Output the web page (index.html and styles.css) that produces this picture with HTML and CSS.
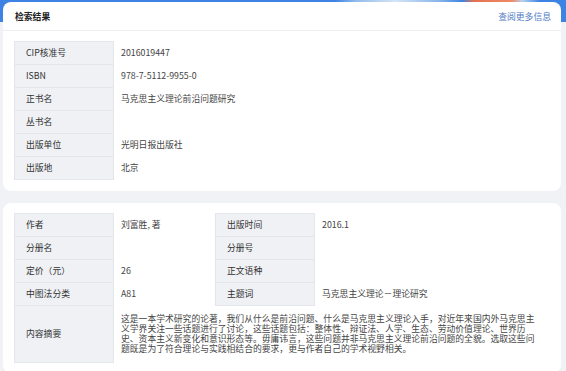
FILE: index.html
```html
<!DOCTYPE html>
<html lang="zh-CN">
<head>
<meta charset="utf-8">
<title>检索结果</title>
<link rel="stylesheet" href="styles.css">
</head>
<body>
<div class="page">
  <section class="card">
    <header class="card-head">
      <span class="card-title">检索结果</span>
      <a class="card-link" href="#">查阅更多信息</a>
    </header>
    <div class="card-body">
      <table class="info">
        <colgroup><col class="c-label"><col></colgroup>
        <tr><th>CIP核准号</th><td>2016019447</td></tr>
        <tr><th>ISBN</th><td>978-7-5112-9955-0</td></tr>
        <tr><th>正书名</th><td>马克思主义理论前沿问题研究</td></tr>
        <tr><th>丛书名</th><td></td></tr>
        <tr><th>出版单位</th><td>光明日报出版社</td></tr>
        <tr><th>出版地</th><td>北京</td></tr>
      </table>
    </div>
  </section>

  <section class="card card-second">
    <div class="card-body">
      <table class="info">
        <colgroup><col class="c-label"><col class="c-val"><col class="c-label"><col></colgroup>
        <tr><th>作者</th><td>刘富胜, 著</td><th>出版时间</th><td>2016.1</td></tr>
        <tr><th>分册名</th><td></td><th>分册号</th><td></td></tr>
        <tr><th>定价（元）</th><td>26</td><th>正文语种</th><td></td></tr>
        <tr><th>中图法分类</th><td>A81</td><th>主题词</th><td>马克思主义理论－理论研究</td></tr>
        <tr class="summary"><th>内容摘要</th><td colspan="3">这是一本学术研究的论著，我们从什么是前沿问题、什么是马克思主义理论入手，对近年来国内外马克思主义学界关注一些话题进行了讨论，这些话题包括：整体性、辩证法、人学、生态、劳动价值理论、世界历史、资本主义新变化和意识形态等。毋庸讳言，这些问题并非马克思主义理论前沿问题的全貌。选取这些问题既是为了符合理论与实践相结合的要求，更与作者自己的学术视野相关。</td></tr>
      </table>
    </div>
  </section>
</div>
</body>
</html>
```

FILE: styles.css
```css
* { box-sizing: border-box; }

html, body {
  margin: 0;
  height: 371px;
  overflow: hidden;
}

body {
  font-family: "Noto Sans CJK SC", "Noto Sans", "Liberation Sans", sans-serif;
  color: #333;
  background:
    linear-gradient(90deg, transparent 335px, #8fbaea 355px, #d6e5f6 395px, #86b4ea 440px, #3d83e4 462px, #e6714f 474px, #ee8a68 512px, #b8d2f0 522px, #3d83e4 540px) top left / 100% 4px no-repeat,
    linear-gradient(#3d83e4 0, #3d83e4 22px, #f0f2f5 22px, #f0f2f5 100%);
}

.page {
  padding: 2px 5px 0 3px;
  display: flex;
  flex-direction: column;
  gap: 12px;
}

.card {
  background: #fff;
  border-radius: 8px;
}

.card-head {
  height: 29px;
  display: flex;
  align-items: center;
  justify-content: space-between;
  padding: 0 10px 0 12px;
  border-bottom: 1px solid #eceef2;
}

.card-title {
  font-size: 8.8px;
  font-weight: 700;
  color: #222;
}

.card-link {
  font-size: 8.8px;
  color: #4f7cc7;
  text-decoration: none;
}

.card-body {
  padding: 10px 11px 11px 11px;
}

.card-second .card-body {
  padding-bottom: 10px;
}

.info {
  width: 100%;
  border-collapse: collapse;
  table-layout: fixed;
  font-size: 8.8px;
}

.c-label { width: 99px; }
.c-val { width: 102px; }

.info th,
.info td {
  height: 23px;
  padding: 0;
  vertical-align: middle;
  text-align: left;
  font-weight: 400;
  line-height: 10px;
}

.info th {
  background: #eff1f5;
  border: 1px solid #e3e6eb;
  padding-left: 11px;
  color: #333;
}

.info td {
  padding-left: 7px;
  color: #444;
}

.summary th {
  height: 57px;
}

.summary td {
  padding: 8px 12px 8px 7px;
  color: #444;
}
```
